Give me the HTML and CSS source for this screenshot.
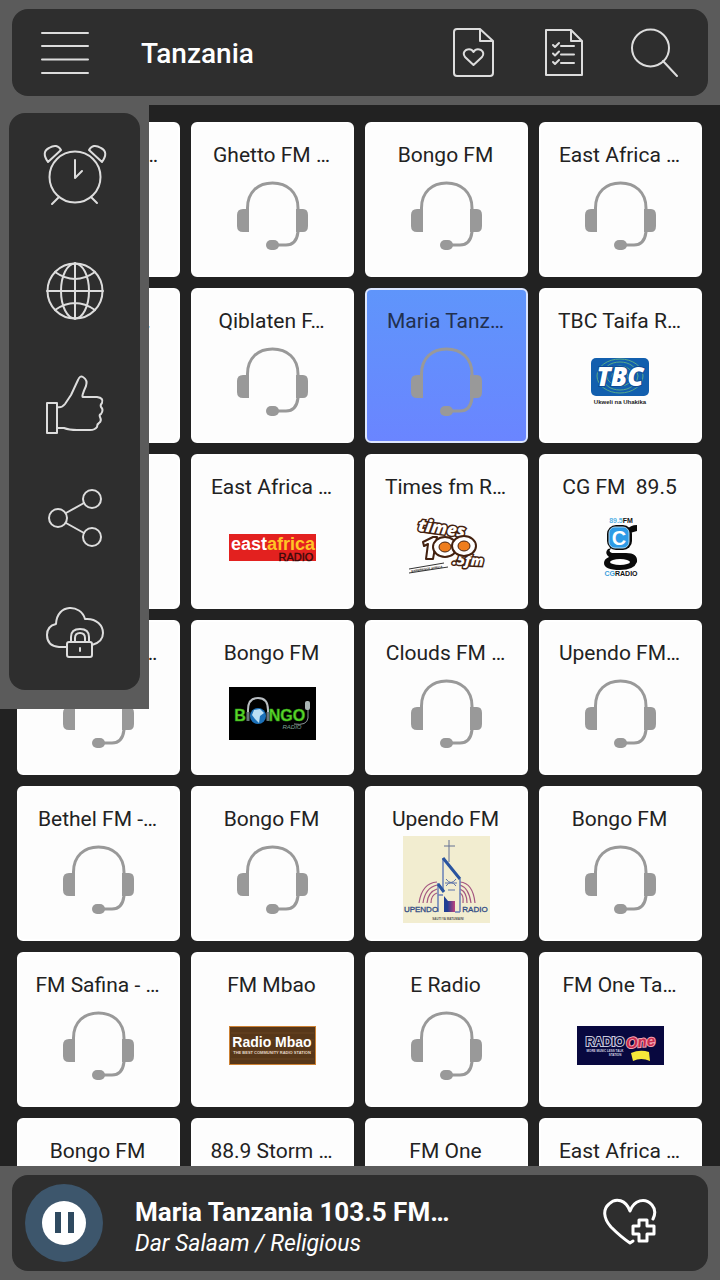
FILE: index.html
```html
<!DOCTYPE html>
<html lang="en">
<head>
    <meta charset="UTF-8">
    <meta name="viewport" content="width=device-width, initial-scale=1.0">
    <title>Tanzania Radio</title>
    <link rel="stylesheet" href="styles.css">
</head>
<body>

    <!-- Shared shapes -->
    <svg class="sprite" aria-hidden="true">
        <symbol id="headset" viewBox="0 0 88 88">
            <path d="M19.500 60V36C19.500 20 30 11 44.500 11S70 20 70 36V60C69 68 65 73 58 73H48" fill="none" stroke="#999" stroke-width="3"/>
            <path d="M21 37V60H15Q9 60 9 54V43Q9 37 15 37Z" fill="#999"/>
            <path d="M68 37H75Q80 37 80 43V54Q80 60 75 60H68Z" fill="#999"/>
            <rect x="38" y="68" width="13" height="10" rx="5" fill="#999"/>
        </symbol>
    </svg>

    <header class="frame">
        <div class="bar top-bar">
            <button class="icon-btn" aria-label="Menu">
                <svg viewBox="0 0 50 50"><path d="M2 5H48M2 18H48M2 31.500H48M2 45H48"/></svg>
            </button>
            <h1>Tanzania</h1>
            <button class="icon-btn" aria-label="Favourites">
                <svg viewBox="0 0 50 50">
                    <path d="M8 1H31L44 13V45Q44 48 41 48H8Q5 48 5 45V4Q5 1 8 1ZM31 1V13H44"/>
                    <path d="M24.500 37L16 29Q13 25 17 22Q22 20 24.500 24Q27 20 32 22Q36 25 33 29Z"/>
                </svg>
            </button>
            <button class="icon-btn" aria-label="Stations list">
                <svg viewBox="0 0 50 50">
                    <path d="M7 2H32L43 13V47H7ZM32 2V13H43"/>
                    <path d="M22 18H35M22 26.500H35M22 35H35M14 17L16 19L20 15M14 25.500L16 27.500L20 23.500M14 34L16 36L20 32"/>
                </svg>
            </button>
            <button class="icon-btn" aria-label="Search">
                <svg viewBox="0 0 50 50"><circle cx="21.500" cy="20" r="18.500"/><path d="M34 33L48 48"/></svg>
            </button>
        </div>
    </header>

    <main>
        <ul class="stations">
            <li><button class="card"><span>East Africa …</span><svg><use href="#headset"/></svg></button></li>
            <li><button class="card"><span>Ghetto FM …</span><svg><use href="#headset"/></svg></button></li>
            <li><button class="card"><span>Bongo FM</span><svg><use href="#headset"/></svg></button></li>
            <li><button class="card"><span>East Africa …</span><svg><use href="#headset"/></svg></button></li>

            <li><button class="card"><span>Qiblaten F…</span><svg><use href="#headset"/></svg></button></li>
            <li><button class="card"><span>Qiblaten F…</span><svg><use href="#headset"/></svg></button></li>
            <li><button class="card selected"><span>Maria Tanz…</span><svg><use href="#headset"/></svg></button></li>
            <li><button class="card"><span>TBC Taifa R…</span>
                <svg viewBox="0 0 88 88">
                    <rect x="15" y="20" width="58" height="38" rx="5" fill="#125fae"/>
                    <g fill="none" stroke="#58a98a">
                        <ellipse cx="44" cy="38" rx="8" ry="6"/>
                        <ellipse cx="44" cy="38" rx="13" ry="10"/>
                        <ellipse cx="44" cy="38" rx="18" ry="14"/>
                        <ellipse cx="44" cy="38" rx="23" ry="17"/>
                    </g>
                    <text class="open slant" x="44" y="48" font-size="26" fill="#fff" stroke="#0d4a94" stroke-width="2" paint-order="stroke">TBC</text>
                    <text class="sans heavy" x="44" y="66" font-size="6" fill="#222">Ukweli na Uhakika</text>
                </svg></button></li>

            <li><button class="card"><span>Bongo FM</span><svg><use href="#headset"/></svg></button></li>
            <li><button class="card"><span>East Africa …</span>
                <svg viewBox="0 0 88 88">
                    <rect x="1" y="30" width="87" height="27" fill="#e3211f"/>
                    <text class="sans heavy" x="45" y="46" font-size="18" fill="#fff">east<tspan fill="#ffc425">africa</tspan></text>
                    <text class="sans" x="68" y="57" font-size="11" fill="#3a0b0b" stroke="#3a0b0b" stroke-width=".4">RADIO</text>
                </svg></button></li>
            <li><button class="card"><span>Times fm R…</span>
                <svg viewBox="0 0 88 88">
                    <g stroke="#43210f" stroke-width="3" paint-order="stroke" fill="#fff">
                        <text class="open slant" x="39" y="30" font-size="17" transform="rotate(8 39 30)">times</text>
                        <text class="open slant" x="66" y="61" font-size="14" transform="rotate(3 66 61)">.5fm</text>
                    </g>
                    <g fill="#fff" stroke="#43210f" stroke-linejoin="round">
                        <path d="M21 38L31 33H35L31 55H24L26 40L22 42Z" stroke-width="2"/>
                        <ellipse cx="43" cy="43" rx="12" ry="10" stroke-width="2"/>
                        <ellipse cx="62" cy="42" rx="12" ry="10" stroke-width="2"/>
                        <ellipse cx="43" cy="43" rx="6" ry="5" fill="#ee7d1d" stroke-width="1"/>
                        <ellipse cx="62" cy="42" rx="6" ry="5" fill="#ee7d1d" stroke-width="1"/>
                    </g>
                    <path d="M7 69L46 63M7 65L42 59" stroke="#333" stroke-width="1"/>
                    <text class="sans heavy" x="25" y="66" font-size="3" fill="#222" transform="rotate(-8 25 66)">EXPERIENCE AFRICA</text>
                </svg></button></li>
            <li><button class="card"><span>CG FM &nbsp;89.5</span>
                <svg viewBox="0 0 88 88">
                    <text class="sans heavy" x="45" y="19" font-size="7" fill="#5ab4e6">89.5<tspan fill="#111">FM</tspan></text>
                    <path d="M51 26Q54 21 61 21V27L54 29" fill="#0a0a0a"/>
                    <rect x="31" y="21" width="25" height="25" rx="9" fill="#0a0a0a"/>
                    <rect x="33" y="23" width="20" height="21" rx="6" fill="#2e9be6" stroke="#a9d8f5"/>
                    <text class="sans heavy" x="43" y="41" font-size="20" fill="#fff">C</text>
                    <path d="M36 44Q31 47 36 49H50Q62 49 61 58Q58 66 44 66Q28 66 28 59Q28 55 33 53Q28 49 32 45Z" fill="#0a0a0a"/>
                    <ellipse cx="44" cy="58" rx="10" ry="3" fill="#fff"/>
                    <text class="sans heavy" x="45" y="72" font-size="7" fill="#3c9fdc">CG<tspan fill="#111">RADIO</tspan></text>
                </svg></button></li>

            <li><button class="card"><span>Clouds FM …</span><svg><use href="#headset"/></svg></button></li>
            <li><button class="card"><span>Bongo FM</span>
                <svg viewBox="0 0 88 88">
                    <rect x="1" y="17" width="87" height="53" fill="#000"/>
                    <g font-size="16" fill="#5fd82c" stroke="#2c9d14" stroke-width=".6">
                        <text class="sans heavy" x="12" y="51">B</text>
                        <text class="sans heavy" x="59" y="51">NGO</text>
                    </g>
                    <circle cx="30" cy="46" r="8" fill="#1b70b8"/>
                    <path d="M26 40L32 39L36 43L32 46L31 53L27 49L24 45Z" fill="#b9def4"/>
                    <path d="M20 49V40Q20 28 30 28T40 40V49" fill="none" stroke="#b9bec2" stroke-width="2"/>
                    <path d="M20 42V51M40 42V51" stroke="#69757c" stroke-width="3"/>
                    <path d="M80 33V48Q79 56 66 54" fill="none" stroke="#8b9696" stroke-width="1"/>
                    <rect x="77" y="31" width="5" height="9" rx="2" fill="#a9b4b4"/>
                    <text class="sans slant" x="64" y="59" font-size="6" fill="#7fa096">RADIO</text>
                </svg></button></li>
            <li><button class="card"><span>Clouds FM …</span><svg><use href="#headset"/></svg></button></li>
            <li><button class="card"><span>Upendo FM…</span><svg><use href="#headset"/></svg></button></li>

            <li><button class="card"><span>Bethel FM -…</span><svg><use href="#headset"/></svg></button></li>
            <li><button class="card"><span>Bongo FM</span><svg><use href="#headset"/></svg></button></li>
            <li><button class="card"><span>Upendo FM</span>
                <svg viewBox="0 0 88 88">
                    <defs>
                        <linearGradient id="door"><stop offset=".3" stop-color="#1f3e93"/><stop offset="1" stop-color="#c0447d"/></linearGradient>
                    </defs>
                    <rect x="1" width="87" height="87" fill="#f2edd0"/>
                    <g fill="none" stroke="#a4557f" stroke-width="1.200">
                        <path d="M17 67Q20 47 35 46M21 67Q23 52 35 49M25 67Q26 56 35 53M29 67Q29 59 35 57"/>
                        <path d="M73 67Q71 47 58 46M69 67Q67 52 58 49M65 67Q65 56 58 53M61 67Q62 59 58 57"/>
                    </g>
                    <path d="M47 4V26M42 10H53" stroke="#657092" stroke-width="1"/>
                    <path d="M41 22V56M58 43V76M36 47V76M36 59H41M53 76H58" stroke="#6880b8" stroke-width="1.500" fill="none"/>
                    <path d="M41 22L58 43M36 48L42 56" stroke="#2a549f" stroke-width="3"/>
                    <path d="M44 43Q49 50 54 43M44 50Q49 43 54 50M43 47H55M46 54H53" fill="none" stroke="#5d73a9" stroke-width="1"/>
                    <path d="M42 60L46 65H53V76H42Z" fill="url(#door)"/>
                    <g font-size="8" fill="#314b84" stroke="#314b84" stroke-width=".3">
                        <text class="sans" x="19" y="76">UPENDO</text>
                        <text class="sans" x="73" y="76">RADIO</text>
                    </g>
                    <text class="sans heavy" x="46" y="84" font-size="3" fill="#555">SAUTI YA MATUMAINI</text>
                </svg></button></li>
            <li><button class="card"><span>Bongo FM</span><svg><use href="#headset"/></svg></button></li>

            <li><button class="card"><span>FM Safina - …</span><svg><use href="#headset"/></svg></button></li>
            <li><button class="card"><span>FM Mbao</span>
                <svg viewBox="0 0 88 88">
                    <rect x="1.500" y="24.500" width="86" height="38" fill="#573719" stroke="#cd8133"/>
                    <path d="M3 31H86M3 38H86M3 49H86M3 57H86" stroke="#694522"/>
                    <text class="sans heavy" x="44" y="45" font-size="14" fill="#fff">Radio Mbao</text>
                    <text class="sans heavy" x="44" y="52" font-size="4" fill="#e4d7c7">THE BEST COMMUNITY RADIO STATION</text>
                </svg></button></li>
            <li><button class="card"><span>E Radio</span><svg><use href="#headset"/></svg></button></li>
            <li><button class="card"><span>FM One Ta…</span>
                <svg viewBox="0 0 88 88">
                    <rect x="1" y="24" width="87" height="39" fill="#08083f"/>
                    <text class="sans heavy" x="29" y="44" font-size="12" fill="#08083f" stroke="#c9c9dd" stroke-width="2" paint-order="stroke">RADIO</text>
                    <text class="sans heavy" x="29" y="50" font-size="3" fill="#d5d5e4">MORE MUSIC LESS TALK</text>
                    <text class="sans heavy" x="39" y="54" font-size="3" fill="#d5d5e4">STATION</text>
                    <path d="M55 51Q64 47 73 50L74 59Q65 55 57 59Z" fill="#f7e83a"/>
                    <text class="sans heavy slant" x="65" y="45" font-size="15" fill="#c92b4e" stroke="#f2a5b3" stroke-width="2" paint-order="stroke" transform="rotate(-6 65 45)">One</text>
                </svg></button></li>

            <li><button class="card"><span>Bongo FM</span><svg><use href="#headset"/></svg></button></li>
            <li><button class="card"><span>88.9 Storm …</span><svg><use href="#headset"/></svg></button></li>
            <li><button class="card"><span>FM One</span><svg><use href="#headset"/></svg></button></li>
            <li><button class="card"><span>East Africa …</span><svg><use href="#headset"/></svg></button></li>
        </ul>

        <!-- Side menu, lies over the station grid -->
        <nav class="drawer">
            <div class="drawer-panel">
                <button aria-label="Alarm">
                    <svg viewBox="0 0 64 64">
                        <circle cx="32" cy="34" r="25.500"/>
                        <path d="M32 17V35L39 28M16 54L9 61M48 54L54 60"/>
                        <path d="M5 19Q-2 9 6 5Q14 0 18 7ZM59 19Q66 9 58 5Q50 0 46 7Z"/>
                    </svg>
                </button>
                <button aria-label="Countries">
                    <svg viewBox="0 0 64 64">
                        <circle cx="32" cy="34" r="27.500"/>
                        <ellipse cx="32" cy="34" rx="14" ry="27.500"/>
                        <path d="M32 6V62M4 34H60M12 15Q32 29 52 15M12 53Q32 39 52 53"/>
                    </svg>
                </button>
                <button aria-label="Rate">
                    <svg viewBox="0 0 64 64">
                        <rect x="4" y="32" width="10" height="30"/>
                        <path d="M14 36Q19 37 22 33L28 24L35 9Q37 4 40 6Q45 9 43 15Q38 26 40 26H54Q61 27 59 32Q57 34 58 36Q61 39 58 43Q56 44 57 46Q59 50 56 52Q54 53 54 56Q52 59 47 59H34Q26 59 21 57H14"/>
                    </svg>
                </button>
                <button aria-label="Share">
                    <svg viewBox="0 0 64 64">
                        <circle cx="15" cy="33" r="9"/>
                        <circle cx="49" cy="14" r="9"/>
                        <circle cx="49" cy="52" r="9"/>
                        <path d="M23 28L41 18M23 38L41 48"/>
                    </svg>
                </button>
                <button aria-label="Privacy">
                    <svg viewBox="0 0 64 64">
                        <path d="M24 48H16Q4 47 4 36Q4 27 13 25C14 4 38 5 42 20C54 19 60 27 60 34Q60 43 49 46"/>
                        <rect x="24" y="43" width="25" height="15" rx="2"/>
                        <path d="M28 43V38Q28 30 37 30T46 38V43M32 43V39Q32 34 37 34T42 39V43"/>
                        <path d="M37 49V52"/>
                    </svg>
                </button>
            </div>
        </nav>
    </main>

    <footer class="frame">
        <div class="bar player">
            <button class="pause" aria-label="Pause">
                <svg viewBox="0 0 44 44">
                    <circle cx="22" cy="22" r="22" fill="#fff"/>
                    <path d="M13 11H19V32H13ZM26 11H32V32H26Z" fill="#2f4a60"/>
                </svg>
            </button>
            <div class="now-playing">
                <strong>Maria Tanzania 103.5 FM…</strong>
                <em>Dar Salaam / Religious</em>
            </div>
            <button class="fav" aria-label="Add to favourites">
                <svg viewBox="0 0 56 50">
                    <path d="M28 45Q19 39 9 29C1 20 1 11 7 6C14 -1 24 2 28 13C32 2 43 -1 50 7Q55 13 51 21M28 45L31 43"/>
                    <path d="M37 22H45V28H52V36H45V43H37V36H31V28H37Z"/>
                </svg>
            </button>
        </div>
    </footer>

</body>
</html>
```
FILE: styles.css
```css
* {
    box-sizing: border-box;
}
body {
    display: flex;
    flex-direction: column;
    height: 100vh;
    margin: 0;
    overflow: hidden;
    background: #222;
    font-family: Roboto, sans-serif;
}
button {
    padding: 0;
    border: none;
    background: none;
    color: inherit;
    font: inherit;
    cursor: pointer;
}
svg {
    display: block;
}
.sprite {
    position: absolute;
    width: 0;
    height: 0;
}

/* Top and bottom bars */
.frame {
    flex: none;
    padding: 9px 12px;
    background: #5b5b5b;
}
.bar {
    display: flex;
    align-items: center;
    border-radius: 16px;
    background: #2e2e2e;
    color: #fff;
}
.top-bar {
    height: 87px;
    padding: 0 29px 0 28px;
    gap: 40px;
}
.top-bar h1 {
    flex: 1;
    margin: 0 0 0 11px;
    padding-top: 2px;
    font-size: 28px;
    font-weight: 500;
}
.icon-btn {
    width: 50px;
    height: 50px;
}
.icon-btn svg,
.drawer svg,
.fav svg {
    width: 100%;
    fill: none;
    stroke: #ddd;
    stroke-width: 2;
    stroke-linecap: round;
    stroke-linejoin: round;
}

/* Station grid */
main {
    position: relative;
    flex: 1;
    min-height: 0;
    overflow: hidden;
}
.stations {
    display: grid;
    grid-template-columns: repeat(4, 1fr);
    gap: 11px;
    margin: 0;
    padding: 17px 18px 17px 17px;
    list-style: none;
}
.card {
    display: flex;
    flex-direction: column;
    align-items: center;
    gap: 2px;
    width: 100%;
    height: 155px;
    padding: 16px 2px 0 0;
    border: 2px solid #fff;
    border-radius: 6px;
    background: #fdfdfd;
    color: #222;
    font-size: 21px;
    line-height: 30px;
    white-space: nowrap;
}
.card svg {
    width: 88px;
    height: 88px;
}
.card.selected {
    border-color: #dce6ff;
    background: linear-gradient(#5f95fb, #6a85ff);
    color: #22304f;
}

/* Lettering inside the station logos */
.sans {
    font-family: "Liberation Sans", sans-serif;
    text-anchor: middle;
}
.open {
    font-family: "Open Sans", sans-serif;
    font-weight: 800;
    text-anchor: middle;
}
.heavy {
    font-weight: bold;
}
.slant {
    font-style: italic;
}

/* Side menu */
.drawer {
    position: absolute;
    top: 0;
    left: 0;
    padding: 8px 9px 19px;
    background: #5b5b5b;
}
.drawer-panel {
    display: flex;
    flex-direction: column;
    width: 131px;
    padding: 5px 0 2px;
    border-radius: 16px;
    background: #2e2e2e;
}
.drawer button {
    display: flex;
    align-items: center;
    justify-content: center;
    height: 114px;
}
.drawer svg {
    width: 64px;
    height: 64px;
}

/* Player */
.player {
    height: 96px;
    padding: 0 50px 0 13px;
}
.pause {
    display: flex;
    align-items: center;
    justify-content: center;
    width: 78px;
    height: 78px;
    border-radius: 50%;
    background: #3d566c;
}
.pause svg {
    width: 44px;
}
.now-playing {
    flex: 1;
    display: flex;
    flex-direction: column;
    margin-left: 32px;
    padding-top: 10px;
    line-height: 32px;
}
.now-playing strong {
    font-size: 26px;
}
.now-playing em {
    font-size: 23px;
}
.fav {
    width: 56px;
}
.fav svg {
    stroke: #fff;
    stroke-width: 3;
}
```
